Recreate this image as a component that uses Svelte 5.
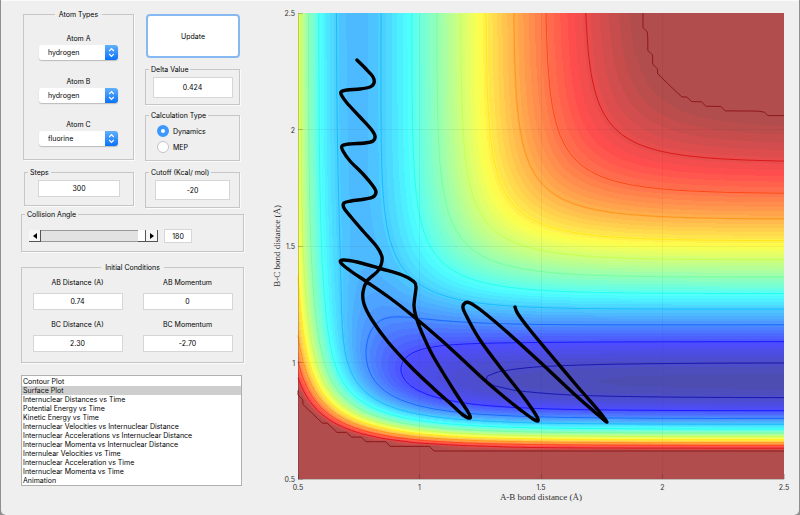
<script>
	let atoms = $state([
		{ id: 'atomA', label: 'Atom A', value: 'hydrogen' },
		{ id: 'atomB', label: 'Atom B', value: 'hydrogen' },
		{ id: 'atomC', label: 'Atom C', value: 'fluorine' }
	]);
	const elements = ['hydrogen', 'deuterium', 'fluorine', 'chlorine'];

	let delta = $state('0.424');
	let calculation = $state('dynamics');
	let steps = $state('300');
	let cutoff = $state('-20');
	let angle = $state(180);

	let conditions = $state([
		{ id: 'abDistance', label: 'AB Distance (A)', value: '0.74' },
		{ id: 'abMomentum', label: 'AB Momentum', value: '0' },
		{ id: 'bcDistance', label: 'BC Distance (A)', value: '2.30' },
		{ id: 'bcMomentum', label: 'BC Momentum', value: '-2.70' }
	]);

	const plots = [
		'Contour Plot',
		'Surface Plot',
		'Internuclear Distances vs Time',
		'Potential Energy vs Time',
		'Kinetic Energy vs Time',
		'Internuclear Velocities vs Internuclear Distance',
		'Internuclear Accelerations vs Internuclear Distance',
		'Internuclear Momenta vs Internuclear Distance',
		'Internulear Velocities vs Time',
		'Internuclear Acceleration vs Time',
		'Internuclear Momenta vs Time',
		'Animation'
	];
	let plot = $state('Surface Plot');

	// plot area inside the svg
	const area = { x: 298, y: 13, w: 486, h: 466 };
	const ticks = [0.5, 1, 1.5, 2, 2.5];
	const px = (v) => area.x + ((v - 0.5) / 2) * area.w;
	const py = (v) => area.y + ((2.5 - v) / 2) * area.h;

	// LEPS surface for H-H-F, kcal/mol and angstrom
	const K = 0.18;
	const TOP = -22.2;
	const BOTTOM = -142.2;
	const HH = { d: 109.4, b: 1.942, r: 0.7417 };
	const HF = { d: 141.2, b: 2.2187, r: 0.917 };

	function terms(p, r) {
		const t = Math.exp(-p.b * (r - p.r));
		const f = p.d / (4 * (1 + K));
		return [
			f * ((3 + K) * t * t - (2 + 6 * K) * t),
			f * ((1 + 3 * K) * t * t - (6 + 2 * K) * t)
		];
	}

	function energy(ab, bc) {
		const [q1, j1] = terms(HH, ab);
		const [q2, j2] = terms(HF, bc);
		const [q3, j3] = terms(HF, ab + bc);
		const s = (j1 - j2) ** 2 + (j2 - j3) ** 2 + (j3 - j1) ** 2;
		return Math.min(TOP, q1 + q2 + q3 - Math.sqrt(s / 2));
	}

	const N = 100;
	const grid = [];
	for (let j = 0; j <= N; j++) {
		const row = [];
		for (let i = 0; i <= N; i++) row.push(energy(0.5 + i * 0.02, 0.5 + j * 0.02));
		grid.push(row);
	}

	// marching squares: filled area above the level and its outline
	function trace(level) {
		let fill = '';
		let line = '';
		const pt = (x, y) =>
			`${(area.x + (x / N) * area.w).toFixed(1)} ${(area.y + area.h - (y / N) * area.h).toFixed(1)}`;
		for (let j = 0; j < N; j++) {
			let run = -1;
			for (let i = 0; i <= N; i++) {
				const c =
					i < N
						? [
								[i, j, grid[j][i]],
								[i + 1, j, grid[j][i + 1]],
								[i + 1, j + 1, grid[j + 1][i + 1]],
								[i, j + 1, grid[j + 1][i]]
							]
						: [];
				const above = c.filter((p) => p[2] >= level).length;
				if (above === 4) {
					if (run < 0) run = i;
					continue;
				}
				if (run >= 0) {
					fill += `M${pt(run, j)}L${pt(i, j)}L${pt(i, j + 1)}L${pt(run, j + 1)}Z`;
					run = -1;
				}
				if (above === 0) continue;
				const poly = [];
				const cross = [];
				c.forEach((a, n) => {
					const b = c[(n + 1) % 4];
					if (a[2] >= level) poly.push(pt(a[0], a[1]));
					if (a[2] >= level !== b[2] >= level) {
						const t = (level - a[2]) / (b[2] - a[2]);
						const p = pt(a[0] + t * (b[0] - a[0]), a[1] + t * (b[1] - a[1]));
						poly.push(p);
						cross.push(p);
					}
				});
				fill += `M${poly.join('L')}Z`;
				line += `M${cross.slice(0, 2).join('L')}`;
			}
		}
		return { fill, line };
	}

	function jet(f, white) {
		const ch = (m) => {
			const v = Math.max(0, Math.min(1, 1.5 - Math.abs(4 * f - m)));
			return Math.round(255 * (v * (1 - white) + white));
		};
		return `rgb(${ch(3)}, ${ch(2)}, ${ch(1)})`;
	}

	const bands = Array.from({ length: 63 }, (_, n) => ({
		color: jet((n + 2) / 65, 0.3),
		d: trace(BOTTOM + ((n + 1) / 64) * (TOP - BOTTOM)).fill
	}));

	const contours = Array.from({ length: 12 }, (_, n) => {
		const level = TOP - 0.01 - n * 10.46;
		return { color: jet((level - BOTTOM) / (TOP - BOTTOM), 0.04), d: trace(level).line };
	});

	const trajectory = [
		[357, 60], [366, 69], [373, 77], [374, 83], [370, 87], [360, 89], [347, 90], [341, 92],
		[342, 96], [347, 103], [360, 117], [371, 129], [375, 136], [373, 141], [365, 143], [349, 144],
		[342, 146], [343, 151], [350, 161], [363, 174], [373, 186], [376, 192], [373, 197], [365, 199],
		[351, 201], [344, 203], [344, 208], [351, 217], [363, 231], [377, 247], [382, 257], [381, 265],
		[377, 272], [367, 281], [363, 292], [364, 304], [372, 320], [388, 342], [410, 366], [433, 388],
		[452, 405], [463, 415], [470, 418], [468, 412], [455, 392], [433, 356], [422, 333], [417, 320],
		[414, 306], [416, 287], [413, 281], [402, 275], [382, 269], [357, 262], [343, 260], [341, 263],
		[352, 272], [367, 282], [390, 298], [413, 316], [440, 339], [463, 360], [480, 376], [503, 396],
		[522, 411], [533, 419], [538, 421], [536, 415], [522, 395], [500, 367], [480, 340], [468, 319],
		[463, 308], [465, 303], [470, 303], [482, 311], [507, 332], [540, 362], [573, 393], [597, 414],
		[607, 422], [598, 410], [577, 386], [550, 354], [530, 330], [518, 314], [515, 307]
	];

	function smooth(points) {
		let d = `M${points[0].join(' ')}`;
		for (let i = 0; i < points.length - 1; i++) {
			const a = points[i - 1] ?? points[i];
			const b = points[i];
			const c = points[i + 1];
			const e = points[i + 2] ?? c;
			d += `C${b[0] + (c[0] - a[0]) / 6} ${b[1] + (c[1] - a[1]) / 6} `;
			d += `${c[0] - (e[0] - b[0]) / 6} ${c[1] - (e[1] - b[1]) / 6} ${c[0]} ${c[1]}`;
		}
		return d;
	}
</script>

<main class="window">
	<form class="controls" onsubmit={(e) => e.preventDefault()}>
		<div class="columns">
			<fieldset class="centered atoms">
				<legend>Atom Types</legend>
				{#each atoms as atom}
					<div class="atom">
						<label for={atom.id}>{atom.label}</label>
						<div class="dropdown">
							<select id={atom.id} bind:value={atom.value}>
								{#each elements as element}
									<option>{element}</option>
								{/each}
							</select>
							<svg viewBox="0 0 13 15" width="13" height="15" aria-hidden="true">
								<path d="M4.2 6 6.5 3.7 8.8 6M4.2 9 6.5 11.3 8.8 9" />
							</svg>
						</div>
					</div>
				{/each}
			</fieldset>

			<div class="stack">
				<button class="update" type="submit">Update</button>
				<fieldset class="small">
					<legend><label for="delta">Delta Value</label></legend>
					<input id="delta" type="text" bind:value={delta} />
				</fieldset>
				<fieldset class="radios">
					<legend>Calculation Type</legend>
					<label><input type="radio" value="dynamics" bind:group={calculation} />Dynamics</label>
					<label><input type="radio" value="mep" bind:group={calculation} />MEP</label>
				</fieldset>
			</div>
		</div>

		<div class="columns second">
			<fieldset class="steps">
				<legend><label for="steps">Steps</label></legend>
				<input id="steps" type="text" bind:value={steps} />
			</fieldset>
			<fieldset class="small cutoff">
				<legend><label for="cutoff">Cutoff (Kcal/ mol)</label></legend>
				<input id="cutoff" type="text" bind:value={cutoff} />
			</fieldset>
		</div>

		<fieldset class="angle">
			<legend><label for="angle">Collision Angle</label></legend>
			<div class="angle-row">
				<div class="scroller">
					<button type="button" aria-label="Decrease angle" onclick={() => (angle = Math.max(0, angle - 1))}>
						<svg viewBox="0 0 4 6" width="4" height="6"><path d="M4 0v6L0 3z" /></svg>
					</button>
					<input type="range" min="0" max="180" aria-label="Collision Angle" bind:value={angle} />
					<button type="button" aria-label="Increase angle" onclick={() => (angle = Math.min(180, angle + 1))}>
						<svg viewBox="0 0 4 6" width="4" height="6"><path d="M0 0v6l4-3z" /></svg>
					</button>
				</div>
				<input id="angle" class="angle-value" type="text" bind:value={angle} />
			</div>
		</fieldset>

		<fieldset class="centered conditions">
			<legend>Initial Conditions</legend>
			{#each conditions as c}
				<div class="condition">
					<label for={c.id}>{c.label}</label>
					<input id={c.id} type="text" bind:value={c.value} />
				</div>
			{/each}
		</fieldset>

		<select class="plots" size="12" aria-label="Plot" bind:value={plot}>
			{#each plots as p}
				<option>{p}</option>
			{/each}
		</select>
	</form>

	<svg class="chart" viewBox="270 0 529 515" role="img" aria-label="Potential energy surface">
		<g shape-rendering="crispEdges">
			<rect x={area.x} y={area.y} width={area.w} height={area.h} fill={jet(1 / 65, 0.3)} />
			{#each bands as band}
				<path d={band.d} fill={band.color} />
			{/each}
		</g>
		{#each contours as contour}
			<path class="contour" d={contour.d} stroke={contour.color} />
		{/each}
		<g class="grid" shape-rendering="crispEdges">
			{#each ticks.slice(1, 4) as t}
				<path d="M{px(t)} {area.y}v{area.h}M{area.x} {py(t)}h{area.w}" />
			{/each}
		</g>
		<g class="ticks" shape-rendering="crispEdges">
			{#each ticks as t}
				<path d="M{px(t)} {area.y + area.h}v-5M{area.x} {py(t)}h5" />
			{/each}
			<path d="M{area.x} {area.y}v{area.h}h{area.w}" />
		</g>
		<path class="trajectory" d={smooth(trajectory)} />
		{#each ticks as t}
			<text x={px(t)} y="490" text-anchor="middle">{t}</text>
			<text x="295" y={py(t) + 3} text-anchor="end">{t}</text>
		{/each}
		<text class="title" x="541" y="500" text-anchor="middle">A-B bond distance (Å)</text>
		<text class="title" transform="translate(280 246) rotate(-90)" text-anchor="middle">B-C bond distance (Å)</text>
	</svg>
</main>

<style>
	:global(body) {
		margin: 0;
		background: #8f8f8f;
	}

	.window {
		display: flex;
		align-items: flex-start;
		margin: 0 1px;
		background: #efefef;
		border-radius: 0 0 5px 5px;
		box-shadow: inset 0 1px #fafafa;
		font-family: Inter, 'Liberation Sans', Arial, sans-serif;
		font-size: 7px;
		line-height: 9px;
		color: #000;
	}

	.controls {
		flex: 0 0 223px;
		padding: 10px 0 0 20px;
		margin-right: 26px;
	}

	.chart {
		flex: 1;
		min-width: 0;
	}

	fieldset {
		box-sizing: border-box;
		min-width: 0;
		margin: 0;
		padding: 0;
		border: 1px solid #c6c6c6;
		box-shadow: 1px 1px #fbfbfb;
	}

	legend {
		margin-left: 3px;
		padding: 0 2px;
	}

	.centered legend {
		margin: 0 auto;
		padding: 0 4px;
	}

	input,
	select,
	button {
		box-sizing: border-box;
		margin: 0;
		font: inherit;
		color: inherit;
	}

	input[type='text'] {
		display: block;
		height: 17px;
		padding: 0;
		border: 1px solid #d6d6d6;
		background: #fff;
		text-align: center;
	}

	.columns {
		display: grid;
		grid-template-columns: 111px 95px;
		gap: 11px;
		padding-left: 2px;
	}

	.second {
		margin-top: 7px;
	}

	.stack {
		display: flex;
		flex-direction: column;
		gap: 6px;
	}

	.atoms {
		height: 150px;
	}

	.atom {
		display: flex;
		flex-direction: column;
		align-items: center;
		gap: 2px;
		padding-top: 15px;
	}

	.atom + .atom {
		padding-top: 17px;
	}

	.dropdown {
		display: flex;
		height: 15px;
		width: 79px;
		border-radius: 3px;
		background: #fff;
		box-shadow: 0 1px 1px #bbb;
	}

	.dropdown select {
		flex: 1;
		min-width: 0;
		padding: 0 0 0 9px;
		border: none;
		background: none;
		appearance: none;
	}

	.dropdown svg {
		border-radius: 0 3px 3px 0;
		background: linear-gradient(#62b0fb, #0a72fa);
	}

	.dropdown path {
		fill: none;
		stroke: #fff;
		stroke-width: 1.2;
	}

	.update {
		height: 44px;
		margin: 4px 0 1px 1px;
		border: 2px solid #86b9f1;
		border-radius: 4px;
		background: #fff;
	}

	.small {
		height: 40px;
	}

	.small input {
		width: 80px;
		height: 21px;
		margin: 3px auto 0;
	}

	.radios {
		height: 50px;
	}

	.radios legend {
		margin-bottom: 3px;
	}

	.radios label {
		display: flex;
		align-items: center;
		gap: 4px;
		padding: 2px 0 2px 11px;
	}

	.radios input {
		width: 12px;
		height: 12px;
		border: 1px solid #c4c4c4;
		border-radius: 50%;
		background: #fff;
		appearance: none;
	}

	.radios input:checked {
		border: 4px solid #3d98fb;
	}

	.steps {
		height: 38px;
		margin-left: 1px;
	}

	.steps input {
		width: 82px;
		margin: 3px auto 0;
	}

	.small.cutoff input {
		width: 75px;
		height: 20px;
	}

	.angle {
		height: 42px;
		margin-top: 2px;
	}

	.angle-row {
		display: flex;
		align-items: center;
		gap: 6px;
		padding: 10px 0 0 7px;
	}

	.scroller {
		display: flex;
		width: 129px;
		height: 12px;
	}

	.scroller button {
		display: flex;
		align-items: center;
		justify-content: center;
		width: 12px;
		padding: 0;
		border: solid #555;
		border-width: 0 1px 1px 0;
		background: #f6f6f6;
	}

	.scroller input {
		flex: 1;
		min-width: 0;
		height: 12px;
		border: solid #999;
		border-width: 1px 0;
		background: #e2e2e2;
		appearance: none;
	}

	.scroller input::-webkit-slider-thumb {
		width: 8px;
		height: 12px;
		border-right: 1px solid #555;
		border-bottom: 1px solid #555;
		background: #fff;
		appearance: none;
	}

	.angle .angle-value {
		width: 28px;
		height: 14px;
	}

	.conditions {
		display: grid;
		grid-template-columns: 90px 90px;
		justify-content: center;
		column-gap: 20px;
		row-gap: 10px;
		height: 100px;
		margin-top: 11px;
		padding-top: 6px;
		align-content: start;
	}

	.condition {
		text-align: center;
	}

	.condition label {
		display: block;
		margin-bottom: 6px;
	}

	.condition input {
		width: 100%;
	}

	.plots {
		display: block;
		width: 221px;
		height: 111px;
		margin-top: 12px;
		padding: 1px 0 0;
		border: 1px solid #b0b0b0;
		border-radius: 0;
		background: #fff;
		overflow-y: scroll;
	}

	.plots option {
		min-height: 9px;
		height: 9px;
		padding: 0 1px;
		line-height: 9px;
	}

	.plots::-webkit-scrollbar {
		width: 12px;
		background: #f8f8f8;
	}

	.contour,
	.grid path,
	.ticks path,
	.trajectory {
		fill: none;
	}

	.contour {
		stroke-width: 1;
		opacity: 0.8;
	}

	.grid path {
		stroke: #262626;
		stroke-opacity: 0.06;
	}

	.ticks path {
		stroke: #262626;
		stroke-opacity: 0.25;
	}

	.trajectory {
		stroke: #000;
		stroke-width: 3.4;
		stroke-linecap: round;
		stroke-linejoin: round;
	}

	text {
		fill: #303030;
	}

	.title {
		font-family: 'Liberation Serif', serif;
		font-size: 9px;
	}
</style>
